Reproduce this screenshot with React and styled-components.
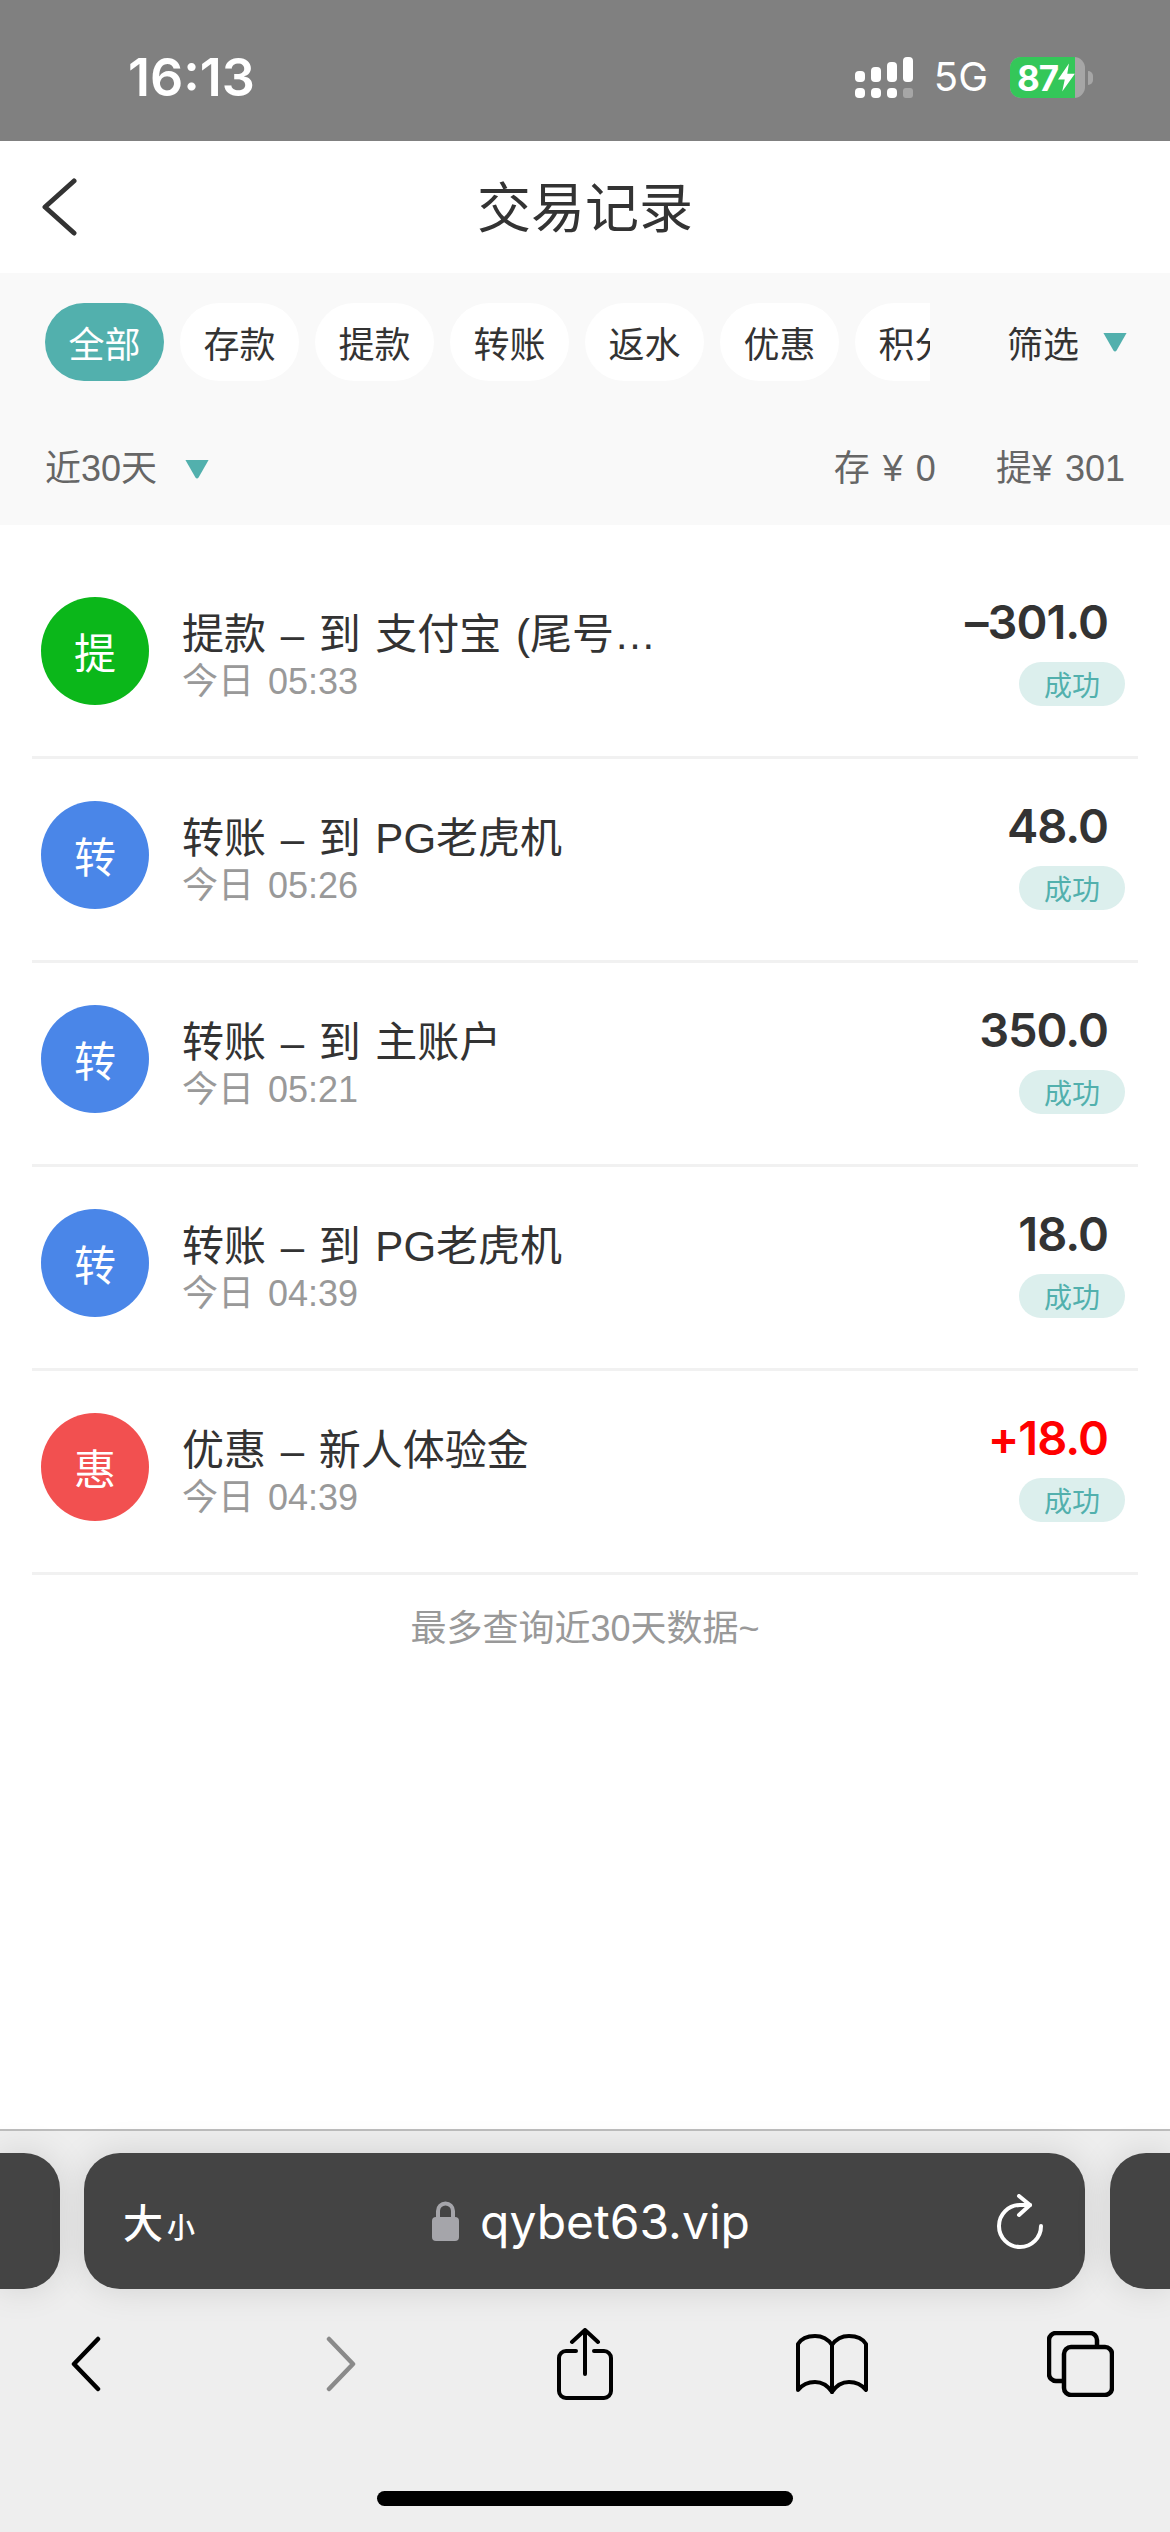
import React from 'react';
import styled, { createGlobalStyle } from 'styled-components';

const cjk = '"Liberation Sans", "Noto Sans CJK SC", sans-serif';
const teal = '#52b0ad';

const GlobalStyle = createGlobalStyle`
  html, body {
    margin: 0;
    padding: 0;
    background: #fff;
  }
  * {
    box-sizing: border-box;
  }
`;

const Page = styled.div`
  width: 1170px;
  height: 2532px;
  display: flex;
  flex-direction: column;
  overflow: hidden;
  font-family: ${cjk};
  color: #333;
`;

const StatusBar = styled.header`
  height: 141px;
  flex: none;
  background: #808080;
  color: #fff;
  display: flex;
  align-items: flex-start;
  justify-content: space-between;
  padding: 57px 77px 0 128px;
  font-family: Inter, sans-serif;
`;

const Clock = styled.span`
  font-size: 52px;
  line-height: 42px;
  font-weight: 600;
`;

const StatusRight = styled.div`
  display: flex;
  align-items: flex-start;
`;

const Network = styled.span`
  font-size: 40px;
  line-height: 36px;
  margin: 2px 22px 0 21px;
`;

const Battery = styled.div`
  width: 75px;
  height: 41px;
  border-radius: 11px;
  overflow: hidden;
  display: flex;
  background: #a6a6a6;
`;

const BatteryLevel = styled.div`
  width: 65px;
  background: #34c759;
  display: flex;
  align-items: center;
  padding-left: 7px;
  font-size: 35px;
  font-weight: 700;
  letter-spacing: -1px;
`;

const BatteryNub = styled.div`
  width: 5px;
  height: 14px;
  margin: 14px 0 0 3px;
  border-radius: 0 5px 5px 0;
  background: #a6a6a6;
`;

const TopBar = styled.div`
  height: 132px;
  flex: none;
  display: grid;
  grid-template-columns: 1fr auto 1fr;
  align-items: center;
  padding: 0 41px;
  background: #fff;
`;

const Title = styled.h1`
  margin: 0 0 6px;
  font-size: 54px;
  font-weight: 400;
  color: #333;
`;

const FilterPanel = styled.section`
  height: 252px;
  flex: none;
  background: #f9f9f9;
  padding: 30px 45px 0;
`;

const FilterRow = styled.div`
  display: flex;
  align-items: center;
  height: 78px;
`;

const ChipScroller = styled.div`
  width: 885px;
  flex: none;
  display: flex;
  gap: 16px;
  overflow: hidden;
`;

const Chip = styled.span`
  flex: none;
  width: 119px;
  height: 78px;
  border-radius: 39px;
  background: ${props => (props.$active ? teal : '#fff')};
  color: ${props => (props.$active ? '#fff' : '#333')};
  font-size: 36px;
  display: flex;
  align-items: center;
  justify-content: center;
`;

const Screen = styled.button`
  margin-left: 77px;
  padding: 0;
  border: 0;
  background: none;
  font: inherit;
  font-size: 36px;
  color: #333;
  white-space: nowrap;
  display: flex;
  align-items: center;
  gap: 23px;
`;

const SummaryRow = styled.div`
  display: flex;
  align-items: center;
  justify-content: space-between;
  margin-top: 68px;
  font-size: 36px;
  line-height: 40px;
  color: #666;
`;

const Range = styled.div`
  display: flex;
  align-items: center;
  gap: 27px;
`;

const Totals = styled.div`
  display: flex;
  gap: 60px;
  word-spacing: 3px;
`;

const Main = styled.main`
  flex: 1;
  padding: 30px 32px 0;
  background: #fff;
`;

const Row = styled.article`
  height: 204px;
  display: flex;
  align-items: center;
  padding: 0 13px 8px 9px;
  border-bottom: 3px solid #f1f1f1;
`;

const Badge = styled.div`
  width: 108px;
  height: 108px;
  flex: none;
  margin-bottom: 2px;
  border-radius: 50%;
  background: ${props => props.$color};
  color: #fff;
  font-size: 42px;
  display: flex;
  align-items: center;
  justify-content: center;
`;

const Info = styled.div`
  flex: 1;
  min-width: 0;
  margin-left: 33px;
  padding-top: 10px;
`;

const Name = styled.div`
  font-size: 42px;
  line-height: 48px;
  word-spacing: 3px;
  color: #333;
`;

const When = styled.div`
  margin-top: 2px;
  font-size: 36px;
  line-height: 42px;
  word-spacing: 4px;
  color: #999;
`;

const Result = styled.div`
  flex: none;
  display: flex;
  flex-direction: column;
  align-items: flex-end;
  padding-bottom: 4px;
`;

const Amount = styled.div`
  font-family: Inter, sans-serif;
  font-size: 47px;
  font-weight: 600;
  letter-spacing: -1px;
  line-height: 56px;
  margin-right: 17px;
  color: ${props => (props.$red ? '#ff0000' : '#333')};
`;

const StatusTag = styled.span`
  width: 106px;
  height: 44px;
  margin-top: 12px;
  border-radius: 22px;
  background: #dcefed;
  color: ${teal};
  font-size: 28px;
  display: flex;
  align-items: center;
  justify-content: center;
`;

const EndNote = styled.p`
  margin: 32px 0 0;
  text-align: center;
  font-size: 36px;
  line-height: 44px;
  color: #999;
`;

const BrowserBar = styled.footer`
  height: 403px;
  flex: none;
  background: #eeeeee;
  border-top: 2px solid #bdbdbd;
  display: flex;
  flex-direction: column;
`;

const TabStrip = styled.div`
  display: flex;
  justify-content: space-between;
  margin-top: 22px;
  height: 136px;
  flex: none;
`;

const TabStub = styled.div`
  width: 60px;
  background: #444;
  border-radius: ${props => (props.$side === 'left' ? '0 36px 36px 0' : '36px 0 0 36px')};
  box-shadow: 0 0 36px rgba(0, 0, 0, 0.12);
`;

const AddressBar = styled.div`
  width: 1001px;
  margin-left: 24px;
  margin-right: 25px;
  background: #444;
  border-radius: 36px;
  box-shadow: 0 0 36px rgba(0, 0, 0, 0.12);
  color: #fff;
  display: grid;
  grid-template-columns: 1fr auto 1fr;
  align-items: center;
  padding: 0 42px 0 39px;
`;

const TextSize = styled.div`
  font-size: 40px;
  font-weight: 500;
  display: flex;
  align-items: baseline;
`;

const TextSizeSmall = styled.span`
  font-size: 28px;
  margin-left: 4px;
`;

const Url = styled.div`
  display: flex;
  align-items: center;
  gap: 21px;
  margin-left: 16px;
  font-family: Inter, sans-serif;
  font-size: 48px;
`;

const Reload = styled.div`
  justify-self: end;
  display: flex;
`;

const Toolbar = styled.nav`
  display: grid;
  grid-template-columns: 172px 338px 150px 344px 152px;
  align-items: center;
  justify-items: center;
  margin-top: 39px;
`;

const HomeIndicator = styled.div`
  width: 416px;
  height: 15px;
  border-radius: 8px;
  background: #000;
  align-self: center;
  margin-top: 91px;
`;

const Caret = ({ color = teal, ...rest }) => (
  <svg width="26" height="20" viewBox="0 0 24 19" {...rest}>
    <path d="M1 1h22L13.5 17.5q-1.5 2-3 0z" fill={color} />
  </svg>
);

const SignalIcon = () => (
  <svg width="58" height="41" viewBox="0 0 58 41" fill="#fff">
    <rect x="0" y="14" width="10" height="11" rx="4" />
    <rect x="16" y="10" width="10" height="15" rx="4" />
    <rect x="32" y="5" width="10" height="20" rx="4" />
    <rect x="48" y="0" width="10" height="25" rx="4" />
    <rect x="0" y="31" width="10" height="10" rx="4" />
    <rect x="16" y="31" width="10" height="10" rx="4" />
    <rect x="32" y="31" width="10" height="10" rx="4" />
    <rect x="48" y="31" width="10" height="10" rx="3" fill="#a6a6a6" />
  </svg>
);

const BoltIcon = () => (
  <svg width="20" height="33" viewBox="0 0 20 33" fill="#fff">
    <path d="M13 0 0 19h8l-3 14 15-21h-9z" />
  </svg>
);

const BackIcon = () => (
  <svg width="38" height="58" viewBox="0 0 38 58" fill="none" stroke="#333" strokeWidth="5" strokeLinecap="round" strokeLinejoin="round">
    <path d="M33 3 4 29l29 26" />
  </svg>
);

const LockIcon = () => (
  <svg width="27" height="40" viewBox="0 0 27 40">
    <path d="M6 17V10a7.500 7.500 0 0 1 15 0v7" fill="none" stroke="#a5a5aa" strokeWidth="4" />
    <rect x="0" y="16" width="27" height="24" rx="4" fill="#a5a5aa" />
  </svg>
);

const ReloadIcon = () => (
  <svg width="46" height="55" viewBox="0 0 46 55" fill="none" stroke="#fff" strokeWidth="4" strokeLinecap="round" strokeLinejoin="round">
    <path d="M44 32A21 21 0 1 1 23 11h10" />
    <path d="M22 2l11 9-11 10" />
  </svg>
);

const ChevronIcon = ({ direction, color }) => (
  <svg width="32" height="56" viewBox="0 0 32 56" fill="none" stroke={color} strokeWidth="4.500" strokeLinecap="round" strokeLinejoin="round">
    <path d={direction === 'left' ? 'M28 3 4 28l24 25' : 'M4 3l24 25L4 53'} />
  </svg>
);

const ShareIcon = () => (
  <svg width="56" height="72" viewBox="0 0 56 72" fill="none" stroke="#000" strokeWidth="4" strokeLinecap="round" strokeLinejoin="round">
    <path d="M28 3v43" />
    <path d="M15 14 28 2l13 12" />
    <path d="M19 23H9a7 7 0 0 0-7 7v33a7 7 0 0 0 7 7h38a7 7 0 0 0 7-7V30a7 7 0 0 0-7-7H37" />
  </svg>
);

const BookIcon = () => (
  <svg width="72" height="60" viewBox="0 0 72 60" fill="none" stroke="#000" strokeWidth="4" strokeLinecap="round" strokeLinejoin="round">
    <path d="M36 11C32 5 26 2 19 2 11 2 5 5 2 10V56C6 51 12 48 19 48c7 0 13 4 17 10 4-6 10-10 17-10 7 0 13 3 17 8V10C67 5 61 2 53 2 46 2 40 5 36 11z" />
    <path d="M36 11v47" />
  </svg>
);

const TabsIcon = () => (
  <svg width="67" height="66" viewBox="0 0 67 66" fill="none" stroke="#000" strokeWidth="4.500" strokeLinejoin="round">
    <path d="M15 50H9a7 7 0 0 1-7-7V9a7 7 0 0 1 7-7h34a7 7 0 0 1 7 7v6" />
    <rect x="17" y="16" width="48" height="48" rx="7" />
  </svg>
);

const tabs = ['全部', '存款', '提款', '转账', '返水', '优惠', '积分'];

const records = [
  { badge: '提', color: '#0bb71a', name: '提款 – 到 支付宝 (尾号…', when: '今日 05:33', amount: '–301.0' },
  { badge: '转', color: '#4a86e8', name: '转账 – 到 PG老虎机', when: '今日 05:26', amount: '48.0' },
  { badge: '转', color: '#4a86e8', name: '转账 – 到 主账户', when: '今日 05:21', amount: '350.0' },
  { badge: '转', color: '#4a86e8', name: '转账 – 到 PG老虎机', when: '今日 04:39', amount: '18.0' },
  { badge: '惠', color: '#f25050', name: '优惠 – 新人体验金', when: '今日 04:39', amount: '+18.0', red: true },
];

const App = () => {
  return (
    <Page>
      <GlobalStyle />
      <StatusBar>
        <Clock>16:13</Clock>
        <StatusRight>
          <SignalIcon />
          <Network>5G</Network>
          <Battery>
            <BatteryLevel>
              87
              <BoltIcon />
            </BatteryLevel>
          </Battery>
          <BatteryNub />
        </StatusRight>
      </StatusBar>

      <TopBar>
        <BackIcon />
        <Title>交易记录</Title>
      </TopBar>

      <FilterPanel>
        <FilterRow>
          <ChipScroller>
            {tabs.map((tab, i) => (
              <Chip key={tab} $active={i === 0}>{tab}</Chip>
            ))}
          </ChipScroller>
          <Screen>
            筛选
            <Caret />
          </Screen>
        </FilterRow>
        <SummaryRow>
          <Range>
            近30天
            <Caret />
          </Range>
          <Totals>
            <span>存 ¥ 0</span>
            <span>提¥ 301</span>
          </Totals>
        </SummaryRow>
      </FilterPanel>

      <Main>
        {records.map((record, i) => (
          <Row key={i}>
            <Badge $color={record.color}>{record.badge}</Badge>
            <Info>
              <Name>{record.name}</Name>
              <When>{record.when}</When>
            </Info>
            <Result>
              <Amount $red={record.red}>{record.amount}</Amount>
              <StatusTag>成功</StatusTag>
            </Result>
          </Row>
        ))}
        <EndNote>最多查询近30天数据~</EndNote>
      </Main>

      <BrowserBar>
        <TabStrip>
          <TabStub $side="left" />
          <AddressBar>
            <TextSize>
              大<TextSizeSmall>小</TextSizeSmall>
            </TextSize>
            <Url>
              <LockIcon />
              qybet63.vip
            </Url>
            <Reload>
              <ReloadIcon />
            </Reload>
          </AddressBar>
          <TabStub $side="right" />
        </TabStrip>
        <Toolbar>
          <ChevronIcon direction="left" color="#000" />
          <ChevronIcon direction="right" color="#8a8a8a" />
          <ShareIcon />
          <BookIcon />
          <TabsIcon />
        </Toolbar>
        <HomeIndicator />
      </BrowserBar>
    </Page>
  );
};

export default App;
